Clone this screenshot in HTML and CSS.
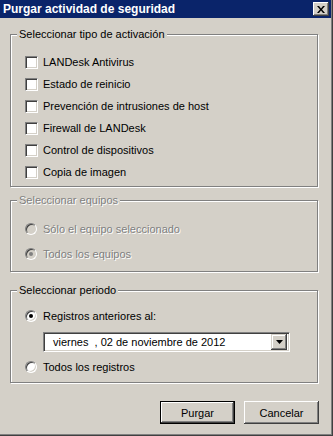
FILE: index.html
```html
<!DOCTYPE html>
<html lang="es">
<head>
    <meta charset="UTF-8">
    <title>Purgar actividad de seguridad</title>
    <link rel="stylesheet" href="styles.css">
</head>
<body>
    <div class="window">
        <div class="titlebar">
            <span class="title">Purgar actividad de seguridad</span>
            <span class="close">
                <svg width="8" height="7" viewBox="0 0 8 7">
                    <path d="M0 0h2l2 2.5L6 0h2L5 3.5 8 7H6L4 4.5 2 7H0l3-3.5z" fill="#000"/>
                </svg>
            </span>
        </div>

        <div class="dialog">
            <fieldset class="group group-types">
                <legend>Seleccionar tipo de activación</legend>
                <label class="option"><span class="check"></span>LANDesk Antivirus</label>
                <label class="option"><span class="check"></span>Estado de reinicio</label>
                <label class="option"><span class="check"></span>Prevención de intrusiones de host</label>
                <label class="option"><span class="check"></span>Firewall de LANDesk</label>
                <label class="option"><span class="check"></span>Control de dispositivos</label>
                <label class="option"><span class="check"></span>Copia de imagen</label>
            </fieldset>

            <fieldset class="group group-devices disabled">
                <legend>Seleccionar equipos</legend>
                <label class="option option-tall"><span class="radio"></span>Sólo el equipo seleccionado</label>
                <label class="option option-tall"><span class="radio radio-on"></span>Todos los equipos</label>
            </fieldset>

            <fieldset class="group group-period">
                <legend>Seleccionar periodo</legend>
                <label class="option"><span class="radio radio-on"></span>Registros anteriores al:</label>
                <div class="combo">
                    <span class="combo-text">viernes  , 02 de noviembre de 2012</span>
                    <span class="combo-button">
                        <svg width="7" height="4" viewBox="0 0 7 4">
                            <path d="M0 0h7L3.5 4z" fill="#000"/>
                        </svg>
                    </span>
                </div>
                <label class="option option-last"><span class="radio"></span>Todos los registros</label>
            </fieldset>

            <div class="actions">
                <button class="btn btn-default">Purgar</button>
                <button class="btn">Cancelar</button>
            </div>
        </div>
    </div>
</body>
</html>
```

FILE: styles.css
```css
* {
    margin: 0;
    padding: 0;
    box-sizing: border-box;
}

body {
    font-family: "Liberation Sans", Arial, sans-serif;
    font-size: 11px;
    color: #000;
    background: #d4d0c8;
}

.window {
    width: 333px;
    height: 436px;
    background: #d4d0c8;
    border-right: 1px solid #404040;
    border-bottom: 1px solid #404040;
    box-shadow: inset -1px -1px 0 #808080;
    padding-right: 1px;
}

/* title bar */
.titlebar {
    height: 18px;
    background: #0a246a;
    display: flex;
    align-items: center;
    justify-content: space-between;
    padding: 0 2px 0 3px;
}

.title {
    color: #fff;
    font-weight: 700;
    font-size: 12px;
    line-height: 14px;
}

.close {
    width: 16px;
    height: 14px;
    background: #d4d0c8;
    display: flex;
    align-items: center;
    justify-content: center;
    box-shadow: inset -1px -1px 0 #404040, inset 1px 1px 0 #fff, inset -2px -2px 0 #808080;
}

/* body */
.dialog {
    padding: 10px 0 0 10px;
}

.group {
    width: 308px;
    border: 1px solid #808080;
    box-shadow: 1px 1px 0 #fff, inset 1px 1px 0 #fff;
    padding: 10px 0 3px 0;
}

.group legend {
    margin-left: 6px;
    padding: 0 2px;
    line-height: 13px;
    background: #d4d0c8;
}

.group-devices {
    margin-top: 7px;
    padding: 9px 0 5px 0;
}

.group-period {
    margin-top: 12px;
    padding: 8px 0 4px 0;
}

.disabled legend,
.disabled .option {
    color: #808080;
    text-shadow: 1px 1px 0 #fff;
}

.option {
    display: flex;
    align-items: center;
    height: 22px;
    padding-left: 14px;
}

.option-tall {
    height: 25px;
}

.option-last {
    margin-top: 4px;
}

/* checkbox */
.check {
    width: 13px;
    height: 13px;
    margin-right: 5px;
    background: #fff;
    border: 1px solid;
    border-color: #808080 #fff #fff #808080;
    box-shadow: inset 1px 1px 0 #404040, inset -1px -1px 0 #d4d0c8;
}

/* radio */
.radio {
    position: relative;
    width: 12px;
    height: 12px;
    margin-right: 6px;
    border-radius: 50%;
    background: #fff;
    border: 1px solid;
    border-color: #808080 #fff #fff #808080;
    box-shadow: inset 1px 1px 0 #404040, inset -1px -1px 0 #d4d0c8;
}

.radio-on::after {
    content: "";
    position: absolute;
    left: 3px;
    top: 3px;
    width: 4px;
    height: 4px;
    border-radius: 50%;
    background: #000;
}

.disabled .radio {
    background: #d4d0c8;
}

.disabled .radio-on::after {
    background: #808080;
}

/* date combo */
.combo {
    display: flex;
    align-items: center;
    width: 247px;
    height: 20px;
    margin: 5px 0 0 32px;
    background: #fff;
    border: 1px solid;
    border-color: #808080 #fff #fff #808080;
    box-shadow: inset 1px 1px 0 #404040, inset -1px -1px 0 #d4d0c8;
    padding: 2px;
}

.combo-text {
    flex: 1;
    padding-left: 7px;
    white-space: pre;
}

.combo-button {
    width: 16px;
    height: 16px;
    display: flex;
    align-items: center;
    justify-content: center;
    background: #d4d0c8;
    box-shadow: inset -1px -1px 0 #404040, inset 1px 1px 0 #d4d0c8, inset -2px -2px 0 #808080, inset 2px 2px 0 #fff;
}

/* buttons */
.actions {
    width: 309px;
    margin-top: 18px;
    display: flex;
    justify-content: flex-end;
    gap: 9px;
}

.btn {
    width: 75px;
    height: 23px;
    font-family: inherit;
    font-size: 11px;
    color: #000;
    background: #d4d0c8;
    border: none;
    box-shadow: inset -1px -1px 0 #404040, inset 1px 1px 0 #fff, inset -2px -2px 0 #808080;
}

.btn-default {
    border: 1px solid #000;
}
```
